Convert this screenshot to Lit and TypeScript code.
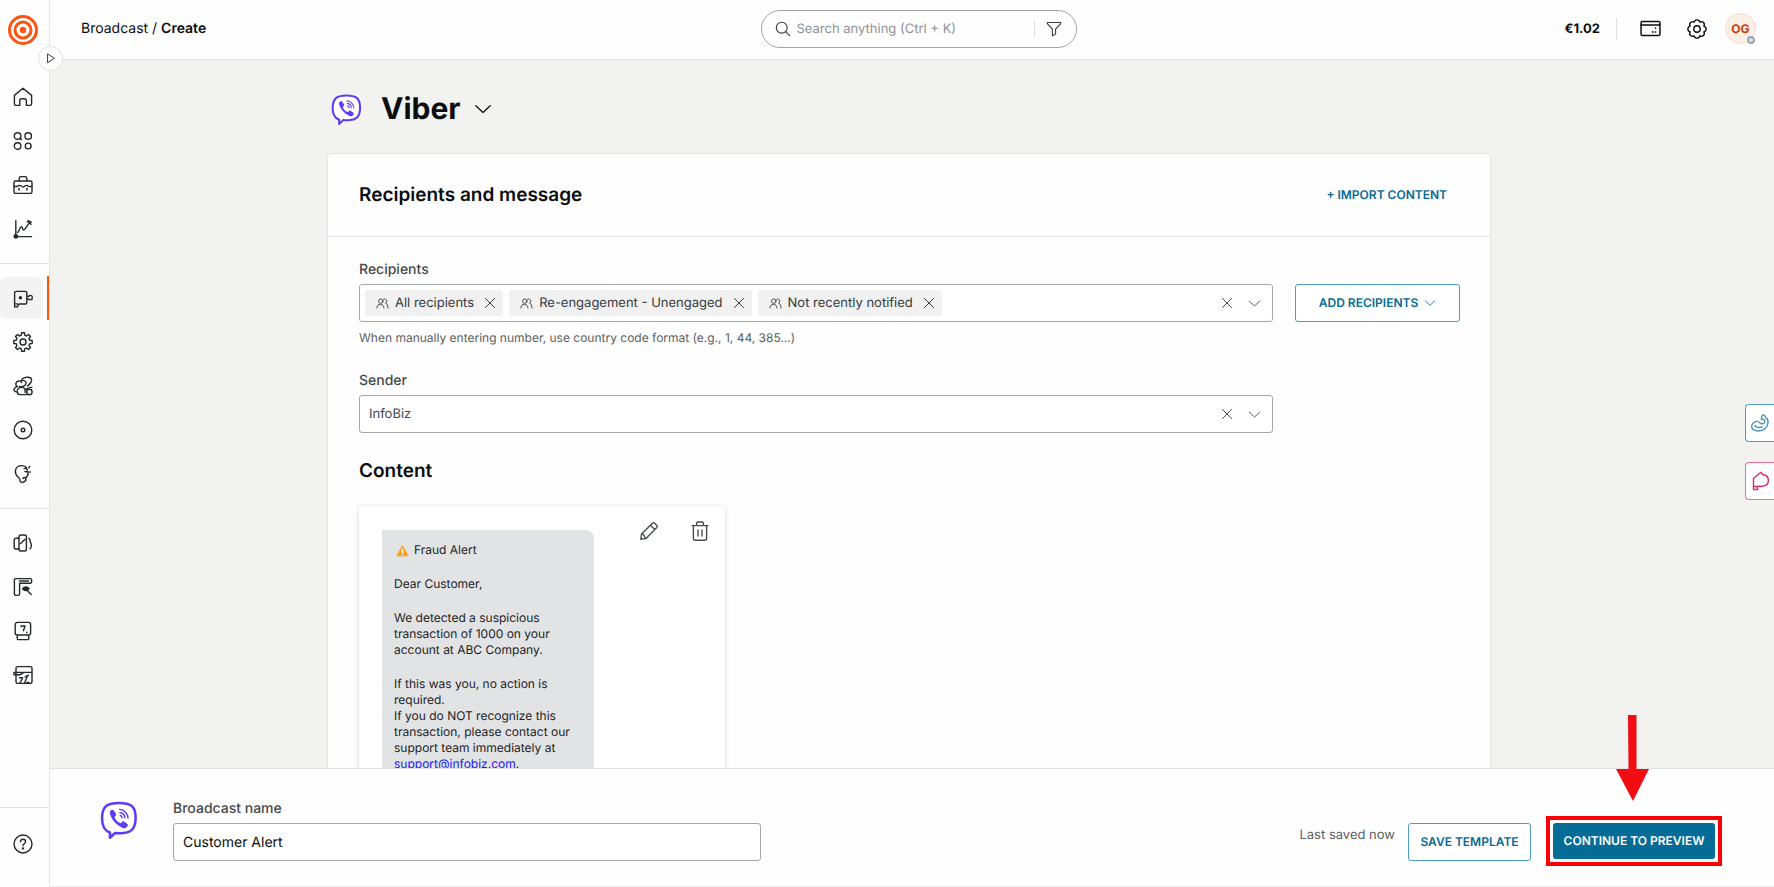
import { LitElement, html, svg, css } from "lit";
import { customElement, property, state } from "lit/decorators.js";
import { classMap } from "lit/directives/class-map.js";

/** Outline of a toothed wheel, centred in a 20 by 20 box. */
function cogPath(teeth: number, outer: number, inner: number): string {
  const step = (Math.PI * 2) / teeth;
  const at = (r: number, a: number) =>
    `${(10 + r * Math.sin(a)).toFixed(2)} ${(10 - r * Math.cos(a)).toFixed(2)}`;
  let d = "";
  for (let i = 0; i < teeth; i++) {
    const a = i * step;
    d += `${i ? "L" : "M"}${at(outer, a - step * 0.2)}L${at(outer, a + step * 0.2)}`;
    d += `L${at(inner, a + step * 0.3)}A${inner} ${inner} 0 0 1 ${at(inner, a + step * 0.7)}`;
  }
  return d + "Z";
}

/** Outline with soft rounded bumps, centred in a 20 by 20 box. */
function scallopPath(bumps: number, radius: number, bump: number): string {
  const step = (Math.PI * 2) / bumps;
  const at = (a: number) =>
    `${(10 + radius * Math.sin(a)).toFixed(2)} ${(10 - radius * Math.cos(a)).toFixed(2)}`;
  let d = `M${at(-step / 2)}`;
  for (let i = 0; i < bumps; i++) d += `A${bump} ${bump} 0 0 1 ${at(i * step + step / 2)}`;
  return d + "Z";
}

const glyphs: Record<string, unknown> = {
  home: svg`<path d="M1.4 8.4 10 1.2l8.6 7.2v8.4a1.6 1.6 0 0 1-1.6 1.6h-3.6v-4.6a2 2 0 0 0-2-2H8.800a2 2 0 0 0-2 2v4.600H3a1.600 1.600 0 0 1-1.600-1.600z"/>`,
  apps: svg`<circle cx="4.600" cy="5" r="3.300"/><path d="M7 7.200 8.600 8.600"/><circle cx="15.200" cy="5" r="3.300"/><circle cx="4.600" cy="15" r="3.300"/><circle cx="15.200" cy="15" r="2.900"/>`,
  toolbox: svg`<rect x="1" y="6" width="18" height="12.400" rx="1.600"/><path d="M6.200 6V3.200c0-1 .6-1.600 1.600-1.600h4.400c1 0 1.600.6 1.600 1.600V6M1 11c2 2 3.600-.6 5.400-.6S8.800 12 10 12s2-1.600 3.600-1.600S17 13 19 11M6 13.200v1.800M14 13.200v1.800"/>`,
  chart: svg`<path d="M2.800 1.600V17.600H18.600M4.600 13.400c2-1 2.200-5.800 3.800-5.800 1.200 0 1 3.400 2.200 3.400 1 0 3.400-4.400 6.800-8.400M14.200 2.800l4 .2M15.400 1.400l2.600 4"/><circle class="solid" cx="2.800" cy="17.400" r="1.700"/>`,
  broadcast: svg`<path d="M1.600 18.800V5a1.600 1.600 0 0 1 1.600-1.600h9a1.600 1.600 0 0 1 1.600 1.600v9.400a1.600 1.600 0 0 1-1.600 1.600H6l-1.600 2.800zM13.800 8.200h2.200c.4-1.200 3.200-1.200 3.200.6v1.600c0 1.800-2.800 1.800-3.200.6h-2.200M1.600 15.600l2.800.4"/><circle class="solid" cx="7.400" cy="9.800" r="1"/>`,
  cog: svg`<path d="${cogPath(8, 9.300, 7)}"/><circle cx="10" cy="10" r="3"/>`,
  scallop: svg`<path d="${scallopPath(8, 7.400, 2.900)}"/><circle cx="10" cy="10" r="3.200"/>`,
  people: svg`<path d="M8.600 4.600c1-4 9.600-4.600 10-.8.200 3-2 4.200-4 6.200M8.400 4.400c3-.4 5 1 4.600 3.200-.6 2.600-4 3.400-6.600 2.800M5.800 5a3 3 0 0 0-1.400 5.600C2 11 .6 13 1.200 14.600c.6 1.600 3 1.200 3 1.200-.2-3 2.400-4.800 4.800-4.600 2.400.2 3.600 2 3 5.200M5.800 5c1.200-.4 2.400.2 2.800 1.600M4.200 15.800c0 2.200.8 2.800 2.600 2.800h7M12 13.800c2-.6 3-2.600 6.800-2.400"/><circle cx="16.400" cy="16" r="2.700"/>`,
  disc: svg`<circle cx="10" cy="10" r="8.800"/><circle cx="10" cy="10" r="1.800"/>`,
  ear: svg`<path d="M5 13C2.800 11 2.200 8.600 2.400 6.600 2.800 3.400 5.400 1.600 9 1.600c2.200 0 3.800.8 4.600 2.200M5 13c1.600 1.200 2.200 2 2 3.400 0 1.800 1.800 2.400 3.400 1.800 2.200-.8 2.800-2.400 2.400-3.800-.6-1.400-2.600-1.200-2.800.2M12.800 14c1.800-1.600 2.600-3.800 2.200-6.400M11 4.600c1.600-.6 3 .2 3.400 1.600M11.800 7.600l3 .2M15.800 4l1-1.600M17 7.600v1"/>`,
  devices: svg`<path d="M6 5.200H3a1.800 1.800 0 0 0-1.800 1.800v7.200A1.800 1.800 0 0 0 3 16h3"/><rect x="6" y="2" width="7.400" height="16" rx="1.800"/><path d="M7.600 10.400 12 6.200M15.800 5.200c1.200.2 1.200 3 1.800 4.200 1 1.800 1.400 3 .4 5l-1 1.400"/>`,
  flow: svg`<path d="M1.400 2.800A1.200 1.200 0 0 1 2.600 1.600h14.800a1.200 1.200 0 0 1 1.200 1.200V5a1.200 1.200 0 0 1-1.200 1.200H6.600v10.600a1.600 1.600 0 0 1-1.600 1.600H3a1.600 1.600 0 0 1-1.600-1.600zM6.600 4h9"/><path class="solid" d="M9.600 11.800c1.800-2.400 4.800-2.600 6.400-.2-1.600 2.600-4.400 2.800-6.400.2z"/><path d="M14.200 13.400l4 4"/>`,
  template: svg`<path d="M4.600 1.400h11.200A1.800 1.800 0 0 1 17.600 3.200V12a2 2 0 0 1-2 2H4.200a2 2 0 0 1-2-2V3.600a2.200 2.200 0 0 1 2.400-2.200zM4.200 14v3.400c0 .8.400 1.200 1.200 1.200h9.200c.8 0 1.200-.4 1.200-1.200V14M8 5.600V5h4l-1.600 4.800M13.800 11.200v.6"/>`,
  panel: svg`<rect x="3" y="1.600" width="16" height="16.800" rx="1.800"/><path d="M.8 7.400h18M1 7.400v2.400h2M3 9.800h4l3.800-2.400M6.600 12.800h3l-2.400 5M12 12l3.400-1.800M14.600 10.800l-3 7M13.800 17.400h2"/>`,
  help: svg`<circle cx="10" cy="10" r="9"/><path d="M7.400 7.600c.2-1.600 1.200-2.400 2.600-2.400 1.600 0 2.600 1 2.600 2.400 0 2-2.600 2.200-2.600 4.200"/><circle class="solid" cx="10" cy="14.400" r=".5"/>`,
  search: svg`<circle cx="8.400" cy="8.400" r="6.800"/><path d="M13.400 13.400l5 5"/>`,
  filter: svg`<path d="M1.600 1.800h16.800v1.400l-6.400 7v6L8 18.600v-8.400L1.600 3.200z"/>`,
  wallet: svg`<rect x="1" y="3.400" width="18" height="13.200" rx="1.200"/><path d="M1 6.600h18M14.800 9.400v.4M11.800 13.400h.8M14.600 13.400h.4"/>`,
  play: svg`<path d="M5.500 3.500v13l10-6.500z"/>`,
  chevron: svg`<path d="M2 6.400l8 7.400 8-7.400"/>`,
  close: svg`<path d="M3.500 3.500l13 13M16.500 3.500l-13 13"/>`,
  group: svg`<circle cx="7.400" cy="6.400" r="3.400"/><path d="M1.400 17c0-3.600 2-5.600 5.400-5.600s5.400 2 5.400 5.600M11.800 3.400c2-1 4.800.2 4.800 2.800 0 1.600-.8 2.600-2 3.200 2.400.8 3.800 3 4 7.600"/>`,
  pencil: svg`<path d="M1.800 18.200 2.600 13 13.400 2.200a1.600 1.600 0 0 1 2.200 0l2.200 2.200a1.600 1.600 0 0 1 0 2.200L7 17.400zM11.400 4.200l4.400 4.400M2.600 13l2 .6.800 2 1.600 1.800"/>`,
  trash: svg`<path d="M2 4.600h16M3.400 4.600v12.600a2 2 0 0 0 2 2h9.200a2 2 0 0 0 2-2V4.600M6.600 4.600V2.400c0-.8.600-1.400 1.400-1.400h4c.8 0 1.400.6 1.400 1.400v2.200M8 9v6M12 9v6"/>`,
  swirl: svg`<path d="M11.500 6.500C11 4 12 1.800 13.800 2c1.500.2 1 2 2 2.600 1.800.8 2.400 2.800 2.200 5-.4 4.600-4 8.400-9.500 8.400-4.200 0-7-1.800-6.800-4.800.2-2.800 2.800-5 5.800-4.800 2.200.2 2.400 2.400 4.600 2.400 1.800 0 3-1.400 2.600-3.200-.4-1.200-2-1.400-3.200-1.100M5 12.500c.4 2 4 2.600 7.200 1.400"/>`,
  bulb: svg`<path d="M3.500 18.500v-11L9 2.800l2-1.500 1.600 2.200c3.400.4 5.800 2.800 5.800 6 0 3.400-2.600 5.400-6 5.800-2 .2-4-.4-4.800 0v3.200zM3.500 15.500h4"/>`,
};

const icon = (name: string, size = 20) => html`
  <svg class="icon" width=${size} height=${size} viewBox="0 0 20 20" aria-hidden="true">${glyphs[name]}</svg>
`;

const viberLogo = (size: number) => html`
  <svg class="viber" width=${size} height=${size} viewBox="0 0 24 24" aria-hidden="true">
    <path class="bubble" d="M12 1.200C5 1.200 1.500 3 1.300 10.500c-.1 5.200 1.200 8.200 5 9.400v3.300l3.200-3c1 .1 2 .1 3 .1 7.400 0 10-2.700 10-9.800C22.500 3 19 1.200 12 1.200z"/>
    <path class="phone" d="M7 5.900c.7-.6 1.300-.5 1.800.2L10 7.900c.4.600.2 1.100-.3 1.600-.7.6-.6 1 0 1.900.7 1.100 1.500 1.800 2.600 2.400.7.400 1 .2 1.500-.4.500-.6 1-.7 1.600-.3l1.700 1.200c.7.500.7 1 .2 1.700-.8 1.100-1.700 1.500-2.900 1-3.900-1.700-6.600-4.600-8-8.400-.4-1.200-.2-2.100.6-2.700z"/>
    <path class="waves" d="M12.400 5.300a5.700 5.700 0 0 1 5.300 5.500M12.600 7.300a3.600 3.600 0 0 1 3.100 3.300M12.800 9.200a1.600 1.600 0 0 1 1.200 1.300"/>
  </svg>
`;

/** Rules that every element here shares. */
const base = css`
  * {
    box-sizing: border-box;
  }
  button,
  input,
  select {
    font: inherit;
    color: inherit;
    text-rendering: inherit;
    margin: 0;
    padding: 0;
    border: 0;
    background: none;
  }
  button {
    cursor: pointer;
    display: inline-flex;
    align-items: center;
    justify-content: center;
  }
  .icon {
    display: block;
    flex: none;
    fill: none;
    stroke: currentColor;
    stroke-width: 1.4;
    stroke-linecap: round;
    stroke-linejoin: round;
  }
  .icon .solid {
    fill: currentColor;
  }
  .viber {
    display: block;
    flex: none;
    overflow: visible;
  }
  .bubble {
    fill: #ffffff;
    stroke: #5b3df5;
    stroke-width: 1.6;
    stroke-linejoin: round;
  }
  .phone {
    fill: #5b3df5;
  }
  .waves {
    fill: none;
    stroke: #5b3df5;
    stroke-width: 0.9;
    stroke-linecap: round;
  }
`;

@customElement("side-nav")
class SideNav extends LitElement {
  @state() private current = "broadcast";

  private groups = [
    [["home", "Home"], ["apps", "Channels"], ["toolbox", "Developer tools"], ["chart", "Analyze"]],
    [["broadcast", "Broadcast"], ["cog", "Moments"], ["people", "People"], ["disc", "Conversations"], ["ear", "Answers"]],
    [["devices", "Numbers"], ["flow", "Forms"], ["template", "Content"], ["panel", "Exchange"]],
  ];

  static styles = [
    base,
    css`
      :host {
        display: flex;
        flex-direction: column;
        position: relative;
        border-right: 1px solid #e3e4e6;
        background: #fefefe;
        color: #24272b;
      }
      .logo {
        display: block;
        margin: 15px 0 18px 8px;
        fill: none;
        stroke: #fc5412;
      }
      .ring {
        stroke-width: 3;
      }
      .centre {
        fill: #fc5412;
        stroke: none;
      }
      .group {
        padding: 12px 0;
        display: flex;
        flex-direction: column;
      }
      .group + .group,
      .foot {
        border-top: 1px solid #dfe1e4;
      }
      .item {
        display: flex;
        align-items: center;
        height: 44px;
        padding: 1px 4px 1px 0;
        border-right: 2px solid transparent;
        color: inherit;
      }
      .tile {
        flex: 1;
        height: 42px;
        padding-left: 13px;
        display: flex;
        align-items: center;
        border-radius: 6px;
      }
      .current {
        border-right-color: #fc5412;
      }
      .current .tile {
        background: #f3f3f3;
      }
      .foot {
        margin-top: auto;
        padding: 14px 0 21px;
      }
      .toggle {
        position: absolute;
        left: 38px;
        top: 46px;
        width: 25px;
        height: 25px;
        border: 1px solid #e0e1e3;
        border-radius: 50%;
        background: #ffffff;
        z-index: 2;
      }
    `,
  ];

  render() {
    return html`
      <svg class="logo" width="30" height="30" viewBox="0 0 30 30" role="img" aria-label="Home">
        <circle class="ring" cx="15" cy="15" r="13.500" />
        <circle class="ring" cx="15" cy="15" r="8" />
        <circle class="centre" cx="15" cy="15" r="3.200" />
      </svg>
      ${this.groups.map(
        (group) => html`
          <nav class="group">
            ${group.map(
              ([id, label]) => html`
                <a
                  class=${classMap({ item: true, current: id === this.current })}
                  href="#${id}"
                  aria-label=${label}
                  @click=${() => (this.current = id)}
                  ><span class="tile">${icon(id)}</span></a
                >
              `
            )}
          </nav>
        `
      )}
      <div class="foot">
        <a class="item" href="#help" aria-label="Help"><span class="tile">${icon("help")}</span></a>
      </div>
      <button class="toggle" aria-label="Expand menu">${icon("play", 13)}</button>
    `;
  }
}

@customElement("top-bar")
class TopBar extends LitElement {
  static styles = [
    base,
    css`
      :host {
        display: grid;
        grid-template-columns: 1fr 316px 1fr;
        align-items: center;
        height: 60px;
        padding: 0 18px 2px 31px;
        border-bottom: 1px solid #e0e1e3;
        background: #fefefe;
        color: #0c0d0f;
      }
      .crumbs {
        font-size: 14px;
        line-height: 20px;
      }
      .crumbs a {
        color: inherit;
        text-decoration: none;
      }
      .crumbs strong {
        font-weight: 600;
      }
      .search {
        display: flex;
        align-items: center;
        height: 38px;
        padding: 0 14px 0 13px;
        border: 1px solid #a3a5a8;
        border-radius: 19px;
        color: #3a3d40;
      }
      .search input {
        flex: 1;
        min-width: 0;
        margin-left: 6px;
        font-size: 13px;
        line-height: 20px;
        outline: none;
      }
      .search input::placeholder {
        color: #8f9194;
        opacity: 1;
      }
      .search button {
        padding-left: 11px;
        border-left: 1px solid #dfe1e4;
      }
      .tools {
        display: flex;
        align-items: center;
        justify-content: flex-end;
      }
      .balance {
        padding-right: 16px;
        border-right: 1px solid #dfe1e4;
        font-size: 13px;
        line-height: 22px;
        font-weight: 700;
      }
      .tool {
        margin-left: 23px;
      }
      .tool + .tool {
        margin-left: 26px;
      }
      .avatar {
        position: relative;
        width: 31px;
        height: 31px;
        margin-left: 18px;
        border: 1px solid #fbdccb;
        border-radius: 50%;
        background: #fdeee6;
        color: #c8400b;
        font-size: 12px;
        font-weight: 700;
      }
      .status {
        position: absolute;
        right: 0;
        bottom: -1px;
        width: 8px;
        height: 8px;
        border: 2px solid #9aa6b2;
        border-radius: 50%;
        background: #dfe4ea;
      }
    `,
  ];

  render() {
    return html`
      <nav class="crumbs"><a href="#broadcast">Broadcast</a> / <strong>Create</strong></nav>
      <div class="search" role="search">
        ${icon("search", 16)}
        <input type="text" aria-label="Search" placeholder="Search anything (Ctrl + K)" />
        <button aria-label="Filter">${icon("filter", 16)}</button>
      </div>
      <div class="tools">
        <span class="balance">€1.02</span>
        <button class="tool" aria-label="Billing">${icon("wallet", 21)}</button>
        <button class="tool" aria-label="Settings">${icon("scallop")}</button>
        <button class="avatar" aria-label="Account OG">OG<span class="status"></span></button>
      </div>
    `;
  }
}

@customElement("recipient-field")
class RecipientField extends LitElement {
  @property({ type: Array }) names: string[] = [];

  static styles = [
    base,
    css`
      :host {
        display: block;
        font-size: 14px;
        line-height: 20px;
        color: #45484b;
      }
      .label {
        display: block;
        margin-bottom: 4px;
        font-weight: 500;
      }
      .box {
        display: flex;
        align-items: center;
        height: 38px;
        padding: 0 11px 0 5px;
        border: 1px solid #a6a8aa;
        border-radius: 3px;
        background: #ffffff;
        font-size: 13px;
      }
      .chip {
        display: flex;
        align-items: center;
        height: 26px;
        margin-right: 6px;
        padding: 0 6px 0 11px;
        border-radius: 3px;
        background: #f1f1f1;
        color: #36393c;
        white-space: nowrap;
      }
      .chip .name {
        margin: 0 9px 0 6px;
      }
      .entry {
        flex: 1;
        min-width: 0;
        outline: none;
      }
      .clear {
        margin-right: 14px;
      }
    `,
  ];

  render() {
    return html`
      <label class="label" for="entry">Recipients</label>
      <div class="box">
        ${this.names.map(
          (name) => html`
            <span class="chip">
              ${icon("group", 13)}
              <span class="name">${name}</span>
              <button aria-label="Remove ${name}" @click=${() => (this.names = this.names.filter((n) => n !== name))}>
                ${icon("close", 14)}
              </button>
            </span>
          `
        )}
        <input class="entry" id="entry" type="text" autocomplete="off" />
        <button class="clear" aria-label="Clear recipients" @click=${() => (this.names = [])}>${icon("close", 14)}</button>
        <button aria-label="Open recipients">${icon("chevron", 13)}</button>
      </div>
    `;
  }
}

@customElement("message-card")
class MessageCard extends LitElement {
  static styles = [
    base,
    css`
      :host {
        display: flex;
        align-items: flex-start;
        justify-content: space-between;
        width: 366px;
        max-width: 100%;
        padding: 24px 15px 24px 23px;
        border-radius: 4px;
        background: #ffffff;
        box-shadow: 0 1px 5px rgba(0, 0, 0, 0.16);
      }
      .message {
        display: flex;
        flex-direction: column;
        gap: 18px;
        width: 212px;
        padding: 12px;
        border-radius: 0 8px 0 0;
        background: #e2e3e5;
        color: #1c1d1f;
        font-size: 12px;
        line-height: 16px;
      }
      .message p {
        margin: 0;
      }
      .subject {
        display: flex;
        align-items: center;
        gap: 5px;
        padding-left: 2px;
      }
      .warning {
        display: block;
      }
      .sign {
        fill: #ff9f0a;
        stroke: #ff9f0a;
        stroke-linejoin: round;
      }
      .mark {
        stroke: #ffffff;
        stroke-width: 2;
        stroke-linecap: round;
      }
      .message a {
        color: #1a1aee;
      }
      .tools {
        display: flex;
        gap: 31px;
        margin-top: -9px;
        color: #4a4d50;
      }
    `,
  ];

  render() {
    return html`
      <div class="message">
        <p class="subject">
          <svg class="warning" width="13" height="13" viewBox="0 0 16 16" role="img" aria-label="Warning">
            <path class="sign" d="M8 2 15 14.500H1z" />
            <path class="mark" d="M8 6.500v3.500M8 12.600v.1" />
          </svg>
          Fraud Alert
        </p>
        <p>Dear Customer,</p>
        <p>We detected a suspicious transaction of 1000 on your account at ABC Company.</p>
        <p>
          If this was you, no action is required.<br />If you do NOT recognize this transaction, please contact our
          support team immediately at <a href="mailto:support@infobiz.com">support@infobiz.com</a>.
        </p>
      </div>
      <div class="tools">
        <button aria-label="Edit message">${icon("pencil")}</button>
        <button aria-label="Delete message">${icon("trash")}</button>
      </div>
    `;
  }
}

@customElement("app-root")
class AppRoot extends LitElement {
  @state() private recipients = ["All recipients", "Re-engagement - Unengaged", "Not recently notified"];

  static styles = [
    base,
    css`
      :host {
        display: grid;
        grid-template-columns: 50px minmax(0, 1fr);
        height: 100vh;
        overflow: hidden;
        font-family: Inter, "Liberation Sans", sans-serif;
        font-size: 14px;
        line-height: 20px;
        text-rendering: geometricPrecision;
        color: #0c0d0f;
        background: #f2f2f1;
      }
      .page {
        position: relative;
        display: grid;
        grid-template-rows: auto minmax(0, 1fr) auto;
        min-height: 0;
      }
      .scroll {
        overflow: hidden;
        padding: 29px 6px 0 0;
      }
      .column {
        max-width: 1164px;
        margin: 0 auto;
      }
      .channel {
        display: flex;
        align-items: center;
        height: 40px;
        margin: 0 0 24px 4px;
      }
      .channel h1 {
        margin: 0 13px 0 19px;
        font-size: 30px;
        line-height: 40px;
        font-weight: 700;
      }
      .panel {
        border: 1px solid #e3e4e5;
        border-radius: 4px;
        background: #fefefe;
      }
      .panel-head {
        display: flex;
        align-items: center;
        justify-content: space-between;
        height: 83px;
        padding: 0 43px 0 31px;
        border-bottom: 1px solid #e4e5e6;
      }
      h2 {
        margin: 0;
        font-size: 19px;
        line-height: 24px;
        font-weight: 600;
      }
      .caps {
        font-size: 12px;
        font-weight: 600;
        color: #066a94;
        white-space: nowrap;
      }
      .panel-body {
        padding: 23px 30px 40px 31px;
      }
      .row {
        display: grid;
        grid-template-columns: minmax(0, 1fr) 165px;
        column-gap: 22px;
      }
      .outlined {
        height: 38px;
        border: 1px solid #4d9dbd;
        border-radius: 3px;
        background: #ffffff;
      }
      .add {
        align-self: end;
        gap: 6px;
      }
      .hint {
        margin: 8px 0 25px;
        font-size: 12px;
        line-height: 16px;
        color: #5c5f62;
      }
      .label {
        display: block;
        margin-bottom: 4px;
        font-weight: 500;
        color: #45484b;
      }
      .box {
        display: flex;
        align-items: center;
        height: 38px;
        padding: 0 11px 0 9px;
        border: 1px solid #a6a8aa;
        border-radius: 3px;
        background: #ffffff;
        font-size: 13px;
        color: #45484b;
      }
      .box select {
        flex: 1;
        min-width: 0;
        appearance: none;
        outline: none;
      }
      .clear {
        margin-right: 14px;
      }
      .content-title {
        margin: 26px 0 23px;
      }
      .side-tabs {
        position: absolute;
        right: 0;
        top: 404px;
        display: flex;
        flex-direction: column;
        gap: 20px;
      }
      .side-tab {
        width: 29px;
        height: 38px;
        border: 1px solid #4d9dbd;
        border-right: 0;
        border-radius: 4px 0 0 4px;
        background: #ffffff;
        color: #4a93b8;
      }
      .pink {
        border-color: #ea6f92;
        color: #dd2a63;
      }
      .footer {
        position: relative;
        display: flex;
        align-items: flex-start;
        padding: 30px 59px 25px 50px;
        border-top: 1px solid #e0e1e3;
        border-bottom: 1px solid #ececec;
        background: #fefefe;
      }
      .footer .viber {
        margin-top: 2px;
      }
      .name {
        flex: 0 1 588px;
        margin-left: 35px;
      }
      .name input {
        display: block;
        width: 100%;
        height: 38px;
        padding: 0 9px;
        border: 1px solid #a6a8aa;
        border-radius: 3px;
        background: #ffffff;
      }
      .actions {
        display: flex;
        align-items: flex-start;
        margin: 24px 0 0 auto;
      }
      .saved {
        margin-right: 13px;
        font-size: 13px;
        line-height: 24px;
        color: #5c5f62;
      }
      .save {
        width: 123px;
      }
      .next {
        position: relative;
        display: flex;
        margin-left: 22px;
        outline: 4px solid #fb0007;
        outline-offset: 3px;
      }
      .primary {
        width: 162px;
        height: 36px;
        border-radius: 3px;
        background: #046c96;
        color: #ffffff;
      }
      .pointer {
        position: absolute;
        left: 63px;
        bottom: 58px;
        width: 33px;
        height: 86px;
        fill: #f20d12;
      }
    `,
  ];

  render() {
    return html`
      <side-nav></side-nav>
      <div class="page">
        <top-bar></top-bar>
        <main class="scroll">
          <div class="column">
            <div class="channel">
              ${viberLogo(31)}
              <h1>Viber</h1>
              <button aria-label="Change channel">${icon("chevron", 18)}</button>
            </div>
            <section class="panel">
              <div class="panel-head">
                <h2>Recipients and message</h2>
                <button class="caps">+ IMPORT CONTENT</button>
              </div>
              <div class="panel-body">
                <div class="row">
                  <recipient-field .names=${this.recipients}></recipient-field>
                  <button class="outlined add caps">ADD RECIPIENTS ${icon("chevron", 12)}</button>
                </div>
                <p class="hint">When manually entering number, use country code format (e.g., 1, 44, 385...)</p>
                <div class="row">
                  <div>
                    <label class="label" for="sender">Sender</label>
                    <div class="box">
                      <select id="sender">
                        <option>InfoBiz</option>
                      </select>
                      <button class="clear" aria-label="Clear sender">${icon("close", 14)}</button>
                      ${icon("chevron", 13)}
                    </div>
                  </div>
                </div>
                <h2 class="content-title">Content</h2>
                <message-card></message-card>
              </div>
            </section>
          </div>
        </main>
        <footer class="footer">
          ${viberLogo(38)}
          <div class="name">
            <label class="label" for="broadcast-name">Broadcast name</label>
            <input id="broadcast-name" type="text" .value=${"Customer Alert"} />
          </div>
          <div class="actions">
            <span class="saved">Last saved now</span>
            <button class="outlined save caps">SAVE TEMPLATE</button>
            <div class="next">
              <svg class="pointer" viewBox="0 0 33 86" aria-hidden="true">
                <path d="M12 0h8.500v54H33L17 86 0 54h12.500z" />
              </svg>
              <button class="primary caps">CONTINUE TO PREVIEW</button>
            </div>
          </div>
        </footer>
        <div class="side-tabs">
          <button class="side-tab" aria-label="Assistant">${icon("swirl")}</button>
          <button class="side-tab pink" aria-label="Feedback">${icon("bulb")}</button>
        </div>
      </div>
    `;
  }
}
